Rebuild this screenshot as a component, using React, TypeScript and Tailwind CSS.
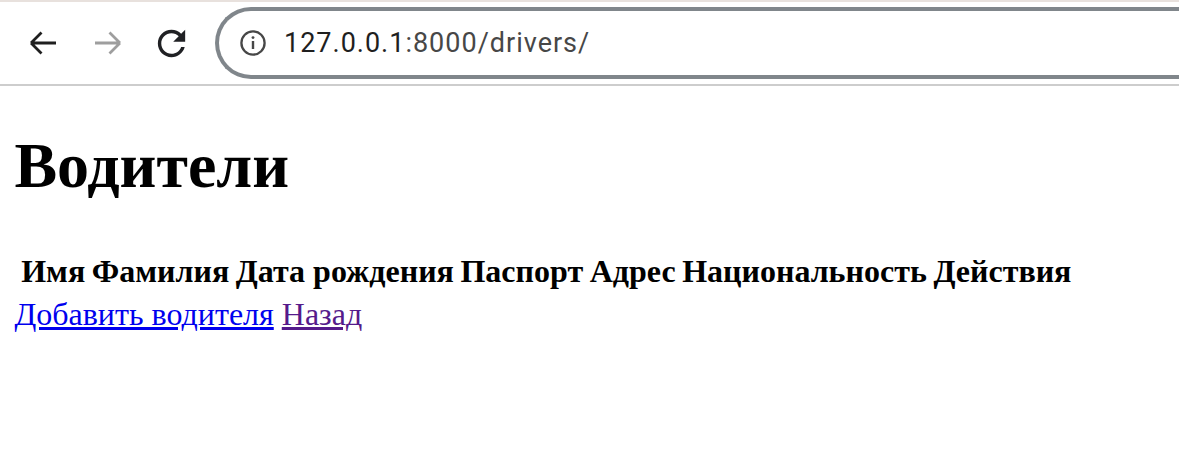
import React from "react";

function BackIcon({ color }: { color: string }) {
  return (
    <svg width="30" height="30" viewBox="0 0 30 30" fill="none">
      <path d="M28 15H3M3 15L13.5 4.5M3 15L13.5 25.5" stroke={color} strokeWidth="2.8" strokeLinecap="butt" />
    </svg>
  );
}

function ForwardIcon({ color }: { color: string }) {
  return (
    <svg width="30" height="30" viewBox="0 0 30 30" fill="none">
      <path d="M2 15H27M27 15L16.5 4.5M27 15L16.5 25.5" stroke={color} strokeWidth="2.8" strokeLinecap="butt" />
    </svg>
  );
}

function ReloadIcon() {
  return (
    <svg width="41" height="41" viewBox="0 0 24 24" fill="#202124">
      <path d="M17.65 6.35C16.2 4.9 14.21 4 12 4c-4.42 0-7.99 3.58-7.99 8s3.57 8 7.99 8c3.73 0 6.84-2.55 7.73-6h-2.08c-.82 2.33-3.04 4-5.65 4-3.31 0-6-2.69-6-6s2.69-6 6-6c1.66 0 3.14.69 4.22 1.78L13 11h7V4l-2.35 2.35z" />
    </svg>
  );
}

function InfoIcon() {
  return (
    <svg width="28" height="28" viewBox="0 0 28 28" fill="none">
      <circle cx="14" cy="14" r="11.6" stroke="#474747" strokeWidth="2.3" />
      <rect x="12.8" y="12" width="2.4" height="8" fill="#474747" />
      <circle cx="14" cy="8.6" r="1.45" fill="#474747" />
    </svg>
  );
}

export default function App() {
  const headers = ["Имя", "Фамилия", "Дата рождения", "Паспорт", "Адрес", "Национальность", "Действия"];
  return (
    <div className="w-[1179px] h-[470px] bg-white overflow-hidden">
      <div className="h-[2px] bg-[#e8e1dd]" />
      <div className="h-[84px] flex items-center border-b-[2px] border-[#cdcdcd] relative">
        <div className="flex items-center">
          <div className="ml-[28px] w-[30px] h-[30px]"><BackIcon color="#1f1f1f" /></div>
          <div className="ml-[35px] w-[30px] h-[30px]"><ForwardIcon color="#9e9e9e" /></div>
          <div className="ml-[28px] w-[41px] h-[41px]"><ReloadIcon /></div>
        </div>
        <div className="ml-[23px] h-[72px] w-[1000px] rounded-l-[36px] border-[4px] border-r-0 border-[#80868b] flex items-center">
          <div className="ml-[20px] w-[28px] h-[28px]"><InfoIcon /></div>
          <div className="ml-[17px] text-[27px] leading-none tracking-[1px] text-[#474747]" style={{ fontFamily: "Roboto, 'Noto Sans', sans-serif" }}>
            <span className="text-[#1f1f1f]">127.0.0.1</span>:8000/drivers/
          </div>
        </div>
      </div>
      <div className="px-[14.4px]" style={{ fontFamily: "'Liberation Serif', 'Times New Roman', serif" }}>
        <h1 className="text-[64px] font-bold mt-[44.4px] mb-[45.4px] leading-[72px] text-black">Водители</h1>
        <table className="ml-[2px] border-separate border-spacing-[3.6px] text-[32px] leading-[36px]">
          <thead>
            <tr>
              {headers.map((h) => (
                <th key={h} className="p-[1.8px] font-bold text-center">{h}</th>
              ))}
            </tr>
          </thead>
        </table>
        <div className="mt-[5px] text-[32px] leading-[33px]">
          <a href="#" className="text-[#0000ee] underline">Добавить водителя</a>{" "}
          <a href="#" className="text-[#551a8b] underline">Назад</a>
        </div>
      </div>
    </div>
  );
}
